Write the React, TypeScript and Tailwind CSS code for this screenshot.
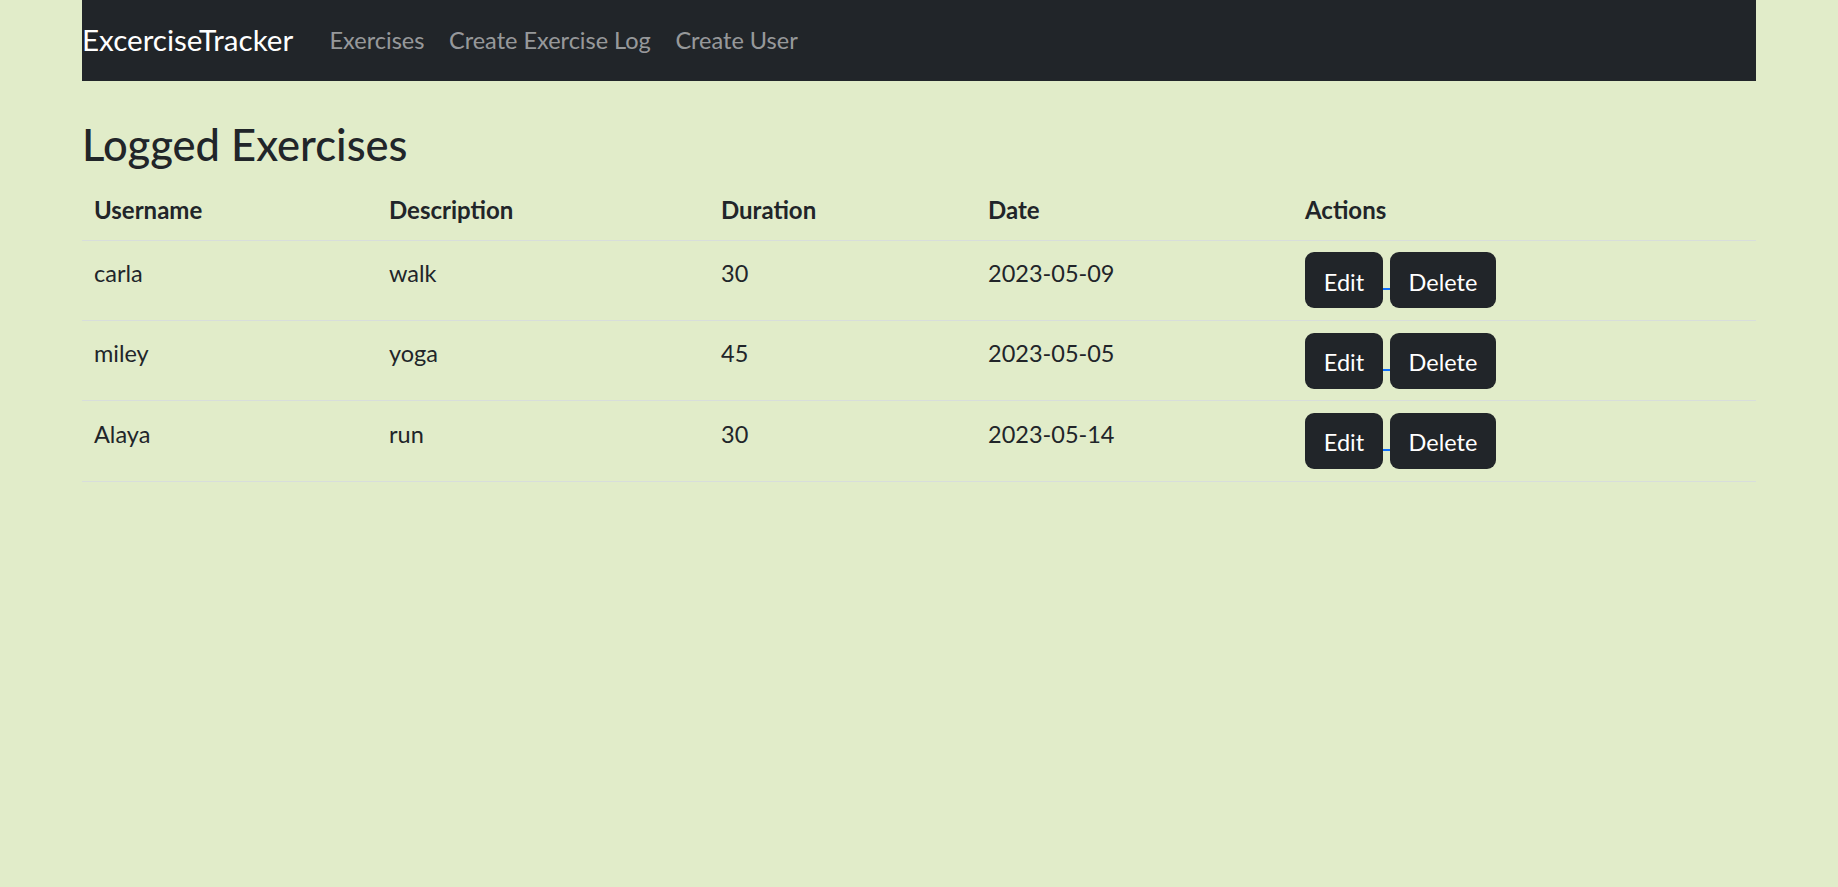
import React from "react";

const rows = [
  { u: "carla", d: "walk", dur: "30", date: "2023-05-09" },
  { u: "miley", d: "yoga", dur: "45", date: "2023-05-05" },
  { u: "Alaya", d: "run", dur: "30", date: "2023-05-14" },
];

export default function App() {
  return (
    <div className="min-h-[887px] bg-[#e1ecc9] text-[#212529] font-['Lato',sans-serif] text-[23.5px] leading-[1.5]">
      <div className="mx-auto w-[1674px]">
        <nav className="flex h-[81px] items-center bg-[#212529]">
          <span className="mr-[24px] text-[29.6px] leading-[1.5] text-white">ExcerciseTracker</span>
          <div className="flex">
            <span className="px-[12.3px] text-[rgba(255,255,255,0.55)]">Exercises</span>
            <span className="px-[12.3px] text-[rgba(255,255,255,0.55)]">Create Exercise Log</span>
            <span className="px-[12.3px] text-[rgba(255,255,255,0.55)]">Create User</span>
          </div>
        </nav>
        <div className="h-[37px]" />
        <h3 className="mb-[10px] text-[43.5px] font-medium leading-[1.2]">Logged Exercises</h3>
        <table className="w-full border-collapse">
          <thead>
            <tr className="border-b-[1.5px] border-[#d8dedb]">
              <th className="w-[295px] px-[12px] py-[11.7px] text-left text-[24px] font-bold">Username</th>
              <th className="w-[332px] px-[12px] py-[11.7px] text-left text-[24px] font-bold">Description</th>
              <th className="w-[267px] px-[12px] py-[11.7px] text-left text-[24px] font-bold">Duration</th>
              <th className="w-[317px] px-[12px] py-[11.7px] text-left text-[24px] font-bold">Date</th>
              <th className="px-[12px] py-[11.7px] text-left text-[24px] font-bold">Actions</th>
            </tr>
          </thead>
          <tbody>
            {rows.map((r, i) => (
              <tr key={i} className="border-b-[1.5px] border-[#d8dedb]">
                <td className="px-[12px] pt-[15.5px] pb-[7.9px] align-top">{r.u}</td>
                <td className="px-[12px] pt-[15.5px] pb-[7.9px] align-top">{r.d}</td>
                <td className="px-[12px] pt-[15.5px] pb-[7.9px] align-top">{r.dur}</td>
                <td className="px-[12px] pt-[15.5px] pb-[7.9px] align-top">{r.date}</td>
                <td className="px-[12px] py-[11.7px] align-top">
                  <div className="flex items-center">
                    <button className="flex h-[56px] w-[78px] items-center justify-center rounded-[9px] bg-[#212529] pt-[4px] text-white">Edit</button>
                    <span className="mt-[18px] h-[2px] w-[7px] bg-[#0d6efd]" />
                    <button className="flex h-[56px] w-[106px] items-center justify-center rounded-[9px] bg-[#212529] pt-[4px] text-white">Delete</button>
                  </div>
                </td>
              </tr>
            ))}
          </tbody>
        </table>
      </div>
    </div>
  );
}
